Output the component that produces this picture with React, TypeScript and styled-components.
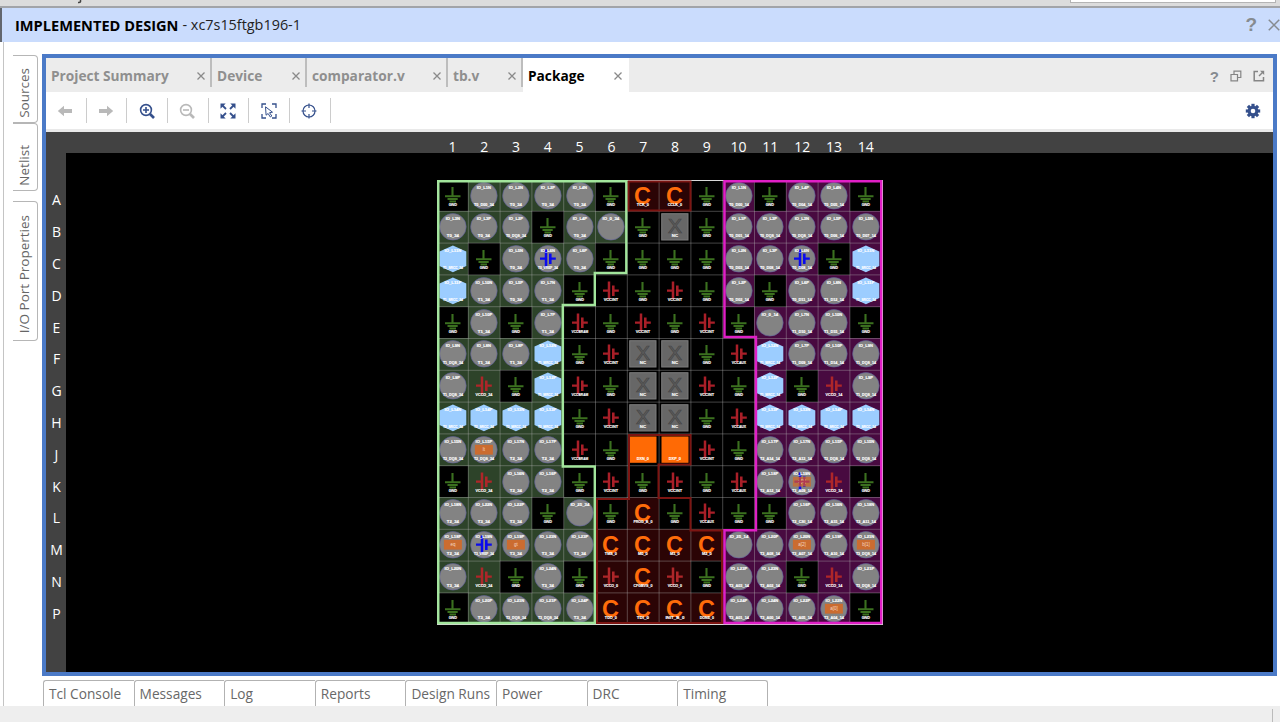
import React from 'react';
import styled, { createGlobalStyle } from 'styled-components';

const UI = '"Open Sans", "Noto Sans", sans-serif';

const Global = createGlobalStyle`
  * { box-sizing: border-box; }
  body { margin: 0; background: #fff; font-family: ${UI}; overflow: hidden; }
`;

const Window = styled.div`
  width: 1280px;
  height: 722px;
  display: flex;
  flex-direction: column;
  background: #fff;
  overflow: hidden;
`;

const TopStrip = styled.div`
  height: 8px;
  flex: none;
  display: flex;
  justify-content: space-between;
  padding: 0 4px 0 77px;
  background: #dcdcdc;
  border-bottom: 2px solid #a2a4a8;
  overflow: hidden;
`;

const Descender = styled.svg`
  display: block;
`;

const SearchEdge = styled.div`
  width: 206px;
  height: 3px;
  background: #fff;
  border: 1px solid #b4b4b4;
  border-top: 0;
`;

const Header = styled.header`
  height: 34px;
  flex: none;
  display: flex;
  align-items: center;
  padding-left: 13px;
  border-left: 2px solid #62666e;
  background: #cadcfd;
  color: #222;
  font-size: 14.4px;
  line-height: 34px;
  white-space: pre;
`;

const Title = styled.b`
  color: #000;
  width: 167.5px;
  font-size: 14.6px;
`;

const DesignName = styled.span`
  flex: 1;
`;

const HeaderActions = styled.div`
  display: flex;
  align-items: center;
  gap: 11px;
`;

const Help = styled.b<{ $size: number }>`
  font-family: "Liberation Sans", sans-serif;
  font-size: ${(p) => p.$size}px;
  color: #868b90;
`;

const Body = styled.div`
  height: 664px;
  flex: none;
  display: flex;
  border-left: 3px solid #fff;
  box-shadow: inset 1px 0 #c4c4c4;
`;

const SideRail = styled.nav`
  width: 39px;
  flex: none;
  padding: 13px 0 0 10px;
`;

const SideTab = styled.div<{ $height: number; $top: number; $gap?: number }>`
  width: 25px;
  height: ${(p) => p.$height}px;
  margin-bottom: ${(p) => p.$gap ?? 0}px;
  padding: ${(p) => p.$top}px 2px 0 0;
  display: flex;
  align-items: flex-start;
  justify-content: center;
  border: solid #b6b6b6;
  border-width: 1px 1px 1px 0;
  border-radius: 0 4px 4px 0;

  span {
    writing-mode: vertical-rl;
    transform: rotate(180deg);
    font-size: 13.5px;
    line-height: 20px;
    color: #666;
    white-space: nowrap;
  }
`;

const Main = styled.main`
  width: 1235px;
  display: flex;
  flex-direction: column;
  padding-top: 12px;
`;

const Frame = styled.section`
  height: 622px;
  flex: none;
  border: 4px solid #4b7ac7;
  display: flex;
  flex-direction: column;
`;

const TabBar = styled.div`
  height: 34px;
  flex: none;
  display: flex;
  background: #ececec;
`;

const Tab = styled.div<{ $width: number; $active?: boolean }>`
  width: ${(p) => p.$width}px;
  height: 34px;
  display: flex;
  align-items: center;
  justify-content: space-between;
  padding: 1px 7px 0 5px;
  font-size: 13.7px;
  font-weight: 700;
  color: ${(p) => (p.$active ? '#000' : '#8f8f8f')};
  background: ${(p) => (p.$active ? '#fff' : 'linear-gradient(#bdbdbd, #bdbdbd) right top / 2px 29px no-repeat')};
`;

const TabActions = styled.div`
  margin-left: auto;
  padding: 2px 8px 0 0;
  display: flex;
  align-items: center;
  gap: 11px;
`;

const Toolbar = styled.div`
  height: 40px;
  flex: none;
  display: flex;
  align-items: center;
  background: #fff;
  border-bottom: 3px solid #e9e9e9;
`;

const Tool = styled.div`
  width: 40.7px;
  height: 25px;
  display: flex;
  align-items: center;
  justify-content: center;
  padding-right: 1px;
  border-right: 1px solid #ccc;
`;

const Settings = styled.div`
  margin-left: auto;
  padding-right: 12px;
  height: 17px;
`;

const Ruler = styled.div`
  height: 21px;
  flex: none;
  display: grid;
  grid-template-columns: repeat(14, 31.8px);
  padding: 4px 0 0 390.5px;
  background: #424242;
  color: #fff;
  font-size: 14px;
  line-height: 21px;
  text-align: center;
`;

const ViewRow = styled.div`
  flex: 1;
  min-height: 0;
  display: flex;
`;

const RowRuler = styled.div`
  width: 20px;
  flex: none;
  display: grid;
  grid-template-rows: repeat(14, 31.8px);
  align-content: start;
  align-items: center;
  padding: 31px 0 0 1px;
  background: #424242;
  color: #fff;
  font-size: 14px;
  text-align: center;
`;

const Canvas = styled.div`
  flex: 1;
  padding: 26.5px 0 0 370.5px;
  background: #000;
`;

const Board = styled.div`
  position: relative;
  width: 446px;
  height: 446px;
  display: grid;
  grid-template-columns: repeat(14, 31.8px);
  grid-template-rows: repeat(14, 31.8px);
`;

const Cell = styled.svg<{ $bg: string }>`
  display: block;
  width: 31.8px;
  height: 31.8px;
  background: ${(p) => p.$bg};
  overflow: visible;
`;

const Outlines = styled.svg`
  position: absolute;
  left: 0;
  top: 0;
  width: 446px;
  height: 446px;
  overflow: visible;
`;

const Dock = styled.div`
  display: flex;
  padding: 4px 0 0 1px;
`;

const DockTab = styled.div`
  width: 90.6px;
  height: 26px;
  padding-left: 5px;
  border: solid #b2b2b2;
  border-width: 1px 0 0 1px;
  border-radius: 3px 0 0 0;
  font-size: 13.7px;
  line-height: 25px;
  color: #686868;
  white-space: nowrap;

  &:last-child {
    border-right-width: 1px;
    border-radius: 3px 3px 0 0;
  }
`;

const StatusBar = styled.footer`
  flex: 1;
  display: flex;
  justify-content: flex-end;
  padding: 3px 7px 0 0;
  background: #eee;

  &::after {
    content: '';
    width: 1px;
    background: #bbb;
  }
`;

const Cross = ({ size = 8, color = '#8a8a8a', weight = 1.3 }) => (
  <svg width={size} height={size} viewBox="0 0 8 8">
    <path d="M.5.5l7 7M7.5.5l-7 7" stroke={color} strokeWidth={weight} fill="none" />
  </svg>
);

const NAVY = '#35508c';

const ArrowIcon = ({ flip = false }) => (
  <svg width="16" height="12" viewBox="0 0 16 12">
    <path transform={flip ? 'matrix(-1 0 0 1 16 0)' : undefined} d="M.8 6L7 .8V4h8v4H7v3.2z" fill="#b9b9b9" />
  </svg>
);

const ZoomIcon = ({ plus = false }) => {
  const c = plus ? NAVY : '#b9b9b9';
  return (
    <svg width="16" height="16" viewBox="0 0 16 16" fill="none" stroke={c}>
      <circle cx="7" cy="7" r="5.4" strokeWidth="1.6" />
      <path d="M11 11l4 4" strokeWidth="2.6" />
      <path d={plus ? 'M4 7h6M7 4v6' : 'M4 7h6'} strokeWidth="1.6" />
    </svg>
  );
};

const FitIcon = () => (
  <svg width="16" height="16" viewBox="0 0 16 16" fill={NAVY} stroke={NAVY} strokeWidth="1.8">
    {[0, 90, 180, 270].map((a) => (
      <g key={a} transform={`rotate(${a} 8 8)`}>
        <path d="M.5.5h5.2L.5 5.7z" stroke="none" />
        <path d="M2 2l4 4" />
      </g>
    ))}
  </svg>
);

const SelectIcon = () => (
  <svg width="16" height="16" viewBox="0 0 16 16" fill="none" stroke={NAVY} strokeWidth="1.3">
    <path d="M1 5V1h4M11 1h4v4M15 11v4h-4M5 15H1v-4" />
    <path d="M4.5 3.8l7 5.4-3 .5 2.3 3.3-1.5 1-2.2-3.5-2 1.7z" strokeWidth="1" />
  </svg>
);

const TargetIcon = () => (
  <svg width="16" height="16" viewBox="0 0 16 16" fill="none" stroke={NAVY} strokeWidth="1.2">
    <circle cx="8" cy="8" r="6" />
    <path d="M8 .5V5M8 11v4.5M.5 8H5M11 8h4.5" />
  </svg>
);

const GearIcon = () => (
  <svg width="16" height="16" viewBox="0 0 16 16">
    {[0, 45, 90, 135].map((a) => (
      <rect key={a} x="6.4" y=".8" width="3.2" height="14.4" fill={NAVY} transform={`rotate(${a} 8 8)`} />
    ))}
    <circle cx="8" cy="8" r="5.3" fill={NAVY} />
    <circle cx="8" cy="8" r="2.3" fill="#fff" />
  </svg>
);

const RestoreIcon = () => (
  <svg width="12" height="12" viewBox="0 0 12 12" fill="none" stroke="#858585" strokeWidth="1.2">
    <path d="M4 4V1.2h6.8v6.3H8" />
    <path d="M1 4.5h6.500v6.300H1z" />
  </svg>
);

const FloatIcon = () => (
  <svg width="12" height="12" viewBox="0 0 12 12" fill="none" stroke="#858585" strokeWidth="1.5">
    <path d="M5 1.5H1.200v9.300h9.300V7" />
    <path d="M6 6l3.500-3.500" />
    <path d="M7 .8h4.200V5z" fill="#858585" stroke="none" />
  </svg>
);

/*
 * One entry per ball: kind, then the labels over and under the symbol.
 *   G ground, P supply, V bank supply, O user I/O, H clock-capable I/O,
 *   R voltage reference, S assigned port, X assigned port on a reference pin,
 *   C configuration, D thermal diode, N not connected
 */
const PINS: string[] = [
  'G|O IO_L1N T0_D00_34|O IO_L2N T0_34|O IO_L2P T0_34|O IO_L4N T0_34|G|C TCK_0|C CCLK_0|G|O IO_L1N T0_D00_14|G|O IO_L4P T0_D04_14|O IO_L4N T0_D05_14|G',
  'O IO_L3N T0_34|O IO_L3P T0_34|O IO_L2P T0_DQS_34|G|O IO_L4P T0_34|O IO_0_34|G|N|G|O IO_L1P T0_D01_14|O IO_L3P T0_DQS_14|O IO_L3N T0_DQS_14|O IO_L5P T0_D06_14|O IO_L5N T0_D07_14',
  'H IO_L11N T1_SRCC_34|G|O IO_L5N T0_34|R IO_L6N T0_VREF_34|O IO_L6P T0_34|G|G|G|G|O IO_L2N T0_D03_14|O IO_L3P T0_D08_14|R IO_L6N T0_D08_14|G|H IO_L11N T1_SRCC_14',
  'H IO_L11P T1_SRCC_34|O IO_L10N T1_34|O IO_L5P T0_34|O IO_L7N T1_34|G|P VCCINT|G|P VCCINT|G|O IO_L2P T0_D02_14|G|O IO_L6P T0_D11_14|O IO_L8N T1_D12_14|H IO_L11P T1_SRCC_14',
  'G|O IO_L10P T1_34|G|O IO_L7P T1_34|P VCCBRAM|G|P VCCINT|G|P VCCINT|G|O IO_0_14|O IO_L7N T1_D10_14|O IO_L10N T1_D15_14|G',
  'O IO_L9N T1_DQS_34|O IO_L8N T1_34|O IO_L8P T1_34|H IO_L12N T1_MRCC_34|G|P VCCINT|N|N|G|P VCCAUX|H IO_L12N T1_MRCC_14|O IO_L7P T1_D09_14|O IO_L10P T1_D14_14|O IO_L9N T1_DQS_14',
  'O IO_L9P T1_DQS_34|V VCCO_34|G|H IO_L12P T1_MRCC_34|P VCCBRAM|G|N|N|P VCCINT|G|H IO_L12P T1_MRCC_14|G|V VCCO_14|O IO_L9P T1_DQS_14',
  'H IO_L14N T2_SRCC_34|H IO_L14P T2_SRCC_34|H IO_L13N T2_MRCC_34|H IO_L13P T2_MRCC_34|G|P VCCINT|N|N|G|P VCCAUX|H IO_L13P T2_MRCC_14|H IO_L13N T2_MRCC_14|H IO_L14P T2_SRCC_14|H IO_L14N T2_SRCC_14',
  'O IO_L15N T2_DQS_34|S IO_L15P T2_DQS_34 lt|O IO_L17N T2_34|O IO_L17P T2_34|P VCCBRAM|G|D DXN_0|D DXP_0|P VCCINT|G|O IO_L17P T2_A14_14|O IO_L17N T2_A13_14|O IO_L15P T2_DQS_14|O IO_L15N T2_DQS_14',
  'G|V VCCO_34|O IO_L16N T2_34|O IO_L16P T2_34|G|P VCCINT|G|P VCCINT|G|P VCCAUX|O IO_L18P T2_A12_14|X IO_L19N T3_A09_14 a[3]|V VCCO_14|G',
  'O IO_L18N T2_34|O IO_L22N T3_34|O IO_L22P T3_34|G|O IO_25_34|G|C PROG_B_0|G|P VCCAUX|G|G|O IO_L16P T2_CSI_14|O IO_L16N T2_A15_14|O IO_L18N T2_A11_14',
  'S IO_L18P T2_34 eq|R IO_L19N T3_VREF_34|S IO_L19P T3_34 gt|O IO_L23N T3_34|O IO_L23P T3_34|C TMS_0|C M0_0|C M1_0|C M2_0|O IO_25_14|O IO_L20P T3_A08_14|S IO_L20N T3_A07_14 a[2]|O IO_L19P T3_A10_14|S IO_L21N T3_DQS_14 b[1]',
  'O IO_L20N T3_34|V VCCO_34|G|O IO_L24N T3_34|G|V VCCO_0|C CFGBVS_0|V VCCO_0|G|O IO_L23P T3_A03_14|O IO_L23N T3_A02_14|G|V VCCO_14|O IO_L21P T3_DQS_14',
  'G|O IO_L20P T3_34|O IO_L21N T3_DQS_34|O IO_L21P T3_DQS_34|O IO_L24P T3_34|C TDO_0|C TDI_0|C INIT_B_0|C DONE_0|O IO_L24P T3_A01_14|O IO_L24N T3_A00_14|O IO_L22P T3_A05_14|S IO_L22N T3_A04_14 a[0]|G',
];

const ROWS = 'ABCDEFGHJKLMNP'.split('');

const bankColor = (kind: string, col: number) => {
  if (kind === 'C') return '#2b0405';
  if ('GPND'.includes(kind)) return '#000';
  if (col < 5 || (col === 5 && kind === 'O')) return '#2d4329';
  return col < 9 ? '#2b0405' : '#480a40';
};

const PinText = ({ y, text }: { y: number; text: string }) => (
  <text
    x="15.9"
    y={y}
    textAnchor="middle"
    textLength={Math.min(20, text.length * 2.3 + (text.length < 4 ? 1.6 : 0.6))}
    lengthAdjust="spacingAndGlyphs"
    fontFamily="Liberation Sans, sans-serif"
    fontWeight="700"
    fontSize="4.4"
    fill="#fff"
    stroke="#fff"
    strokeWidth=".15"
  >
    {text}
  </text>
);

const Ground = () => (
  <path d="M15.5 7v9.5M8 16.3h15.5M10.5 19h10.200M12.500 21.500h6.500" stroke="#3b701f" strokeWidth="2.1" fill="none" />
);

const Supply = ({ color }: { color: string }) => (
  <g stroke={color} fill="none">
    <path d="M8 15.6h6M19 15.6h4.800" strokeWidth="2.3" />
    <path d="M14 6.500V24.500" strokeWidth="2.5" />
    <path d="M18.300 10.500V21" strokeWidth="2.600" />
  </g>
);

const Pin = ({ spec, col }: { spec: string; col: number }) => {
  const [kind, first, second, port] = spec.split(' ');
  const io = 'OHRSX'.includes(kind);
  return (
    <Cell $bg={bankColor(kind, col)} viewBox="0 0 31.8 31.8">
      {io && kind !== 'H' && <circle cx="15.9" cy="15.8" r="13.3" fill="#838383" stroke="#5c5c9c" strokeWidth=".6" />}
      {kind === 'H' && <path d="M15.9 2.500L29.300 8.500v14.500L15.900 29.200 2.500 23V8.500z" fill="#9ccdff" />}
      {kind === 'G' && <Ground />}
      {(kind === 'P' || kind === 'V') && <Supply color={kind === 'P' ? '#a91f28' : '#ae2629'} />}
      {(kind === 'R' || kind === 'X') && <Supply color="#0a0aee" />}
      {(kind === 'S' || kind === 'X') && (
        <>
          <rect x="6.9" y="10.8" width="18" height="9.8" fill="#cb6c30" opacity={kind === 'X' ? 0.8 : 1} />
          <text x="15.9" y="17.3" textAnchor="middle" fontFamily="Liberation Sans, sans-serif" fontSize="4.5" fill="#f6d9c4">
            {port}
          </text>
        </>
      )}
      {kind === 'X' && <path d="M9 15.6h14M14 11.500v8M18.300 11.500v8" stroke="#b23a50" strokeWidth="1.8" />}
      {kind === 'N' && (
        <>
          <rect x="2.7" y="2.7" width="26.300" height="26.300" fill="#676767" stroke="#7c7c7c" />
          <text x="15.9" y="22.500" textAnchor="middle" fontFamily="Liberation Sans, sans-serif" fontSize="21" fill="#5e5e5e" stroke="#454545" strokeWidth=".7">
            X
          </text>
        </>
      )}
      {kind === 'D' && <rect x="2.5" y="2.5" width="27" height="26.3" fill="#ff6a05" />}
      {kind === 'C' && (
        <text x="15.6" y="24" textAnchor="middle" fontFamily="Liberation Sans, sans-serif" fontWeight="700" fontSize="23.5" fill="#ff6c0a">
          C
        </text>
      )}
      {io ? (
        <>
          <PinText y={8.6} text={first} />
          {second && <PinText y={26} text={second} />}
        </>
      ) : (
        <PinText y={26.400} text={kind === 'G' ? 'GND' : kind === 'N' ? 'NC' : first} />
      )}
    </Cell>
  );
};

const gridLines = Array.from({ length: 13 }, (_, i) => (i + 1) * 31.8);

const BankOutlines = () => (
  <Outlines viewBox="437 180 446 446" fill="none">
    {gridLines.map((d) => (
      <path key={d} d={`M${436.5 + d} 180v445M437 ${179.5 + d}h445`} stroke="#b4b4b4" strokeOpacity=".38" />
    ))}
    <path d="M437 180.500h446M882.500 180v445M437 624.500h446M437.500 180v445" stroke="#d8d8d8" />
    <g strokeWidth="2" stroke="#7d1512">
      <path d="M628.500 181.500h62v29h-62z" />
      <path d="M629 435h61.500v29.500h-32V498h32v32.500H722V623H597V499h32z" />
    </g>
    <path d="M438.300 181.300h188v91.700h-31.500v32h-32v161.500h32v156.500h-156.500z" stroke="#a2e59c" strokeWidth="2.4" />
    <path d="M724.500 181.300h156.700V623H724.500v-92.800H756V337h-31.500z" stroke="#e01fc6" strokeWidth="2.4" />
  </Outlines>
);

const TABS: [string, number][] = [
  ['Project Summary', 166],
  ['Device', 95],
  ['comparator.v', 141],
  ['tb.v', 75],
];

const App = () => (
  <>
    <Global />
    <Window>
      <TopStrip>
        <Descender width="5" height="4">
          <path d="M3.5 0v1.800q0 .8-2.500.6" stroke="#444" strokeWidth="1.5" fill="none" />
        </Descender>
        <SearchEdge />
      </TopStrip>
      <Header>
        <Title>IMPLEMENTED DESIGN</Title>
        <DesignName>- xc7s15ftgb196-1</DesignName>
        <HeaderActions>
          <Help $size={19}>?</Help>
          <Cross size={12} color="#868b90" weight={1} />
        </HeaderActions>
      </Header>
      <Body>
        <SideRail>
          <SideTab $height={68} $top={12}><span>Sources</span></SideTab>
          <SideTab $height={68} $top={21} $gap={10}><span>Netlist</span></SideTab>
          <SideTab $height={140} $top={13}><span>I/O Port Properties</span></SideTab>
        </SideRail>
        <Main>
          <Frame>
            <TabBar>
              {TABS.map(([name, width]) => (
                <Tab key={name} $width={width}>
                  {name}
                  <Cross />
                </Tab>
              ))}
              <Tab $width={106} $active>
                Package
                <Cross />
              </Tab>
              <TabActions>
                <Help $size={15}>?</Help>
                <RestoreIcon />
                <FloatIcon />
              </TabActions>
            </TabBar>
            <Toolbar>
              <Tool><ArrowIcon /></Tool>
              <Tool><ArrowIcon flip /></Tool>
              <Tool><ZoomIcon plus /></Tool>
              <Tool><ZoomIcon /></Tool>
              <Tool><FitIcon /></Tool>
              <Tool><SelectIcon /></Tool>
              <Tool><TargetIcon /></Tool>
              <Settings><GearIcon /></Settings>
            </Toolbar>
            <Ruler>
              {ROWS.map((_, i) => (
                <span key={i}>{i + 1}</span>
              ))}
            </Ruler>
            <ViewRow>
              <RowRuler>
                {ROWS.map((r) => (
                  <span key={r}>{r}</span>
                ))}
              </RowRuler>
              <Canvas>
                <Board>
                  {PINS.flatMap((row, r) =>
                    row.split('|').map((spec, c) => <Pin key={`${r}-${c}`} spec={spec} col={c} />),
                  )}
                  <BankOutlines />
                </Board>
              </Canvas>
            </ViewRow>
          </Frame>
          <Dock>
            {['Tcl Console', 'Messages', 'Log', 'Reports', 'Design Runs', 'Power', 'DRC', 'Timing'].map((t) => (
              <DockTab key={t}>{t}</DockTab>
            ))}
          </Dock>
        </Main>
      </Body>
      <StatusBar />
    </Window>
  </>
);

export default App;
